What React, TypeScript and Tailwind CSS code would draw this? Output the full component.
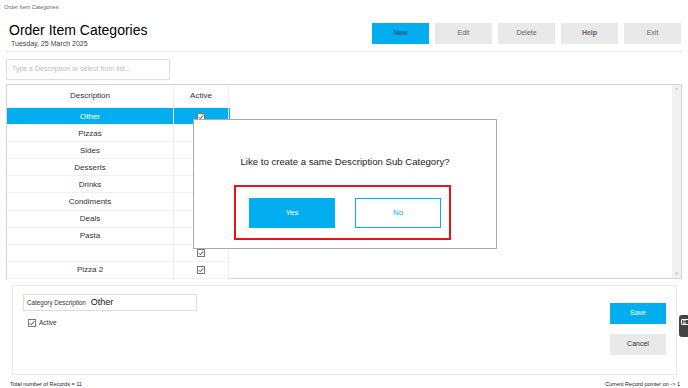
import React from 'react';

const rows = [
  { label: 'Other', active: true },
  { label: 'Pizzas', active: false },
  { label: 'Sides', active: false },
  { label: 'Desserts', active: false },
  { label: 'Drinks', active: false },
  { label: 'Condiments', active: false },
  { label: 'Deals', active: false },
  { label: 'Pasta', active: false },
  { label: '', active: true },
  { label: 'Pizza 2', active: true },
];

const topButtons = ['New', 'Edit', 'Delete', 'Help', 'Exit'];

function Check() {
  return (
    <svg width="8" height="8" viewBox="0 0 8 8">
      <rect x="0.5" y="0.5" width="7" height="7" fill="white" stroke="#777" />
      <path d="M1.8 4.2 L3.3 5.7 L6.3 2.2" fill="none" stroke="#444" strokeWidth="1" />
    </svg>
  );
}

export default function App() {
  return (
    <div className="relative w-[688px] h-[388px] bg-white overflow-hidden font-['Liberation_Sans',Arial,sans-serif] text-[#222]">
      <div className="h-[15px] pl-[4px] pt-[4px] text-[5.5px] leading-[7px] text-[#666]">Order Item Categories</div>

      {/* header */}
      <div className="mx-[6px] flex items-start justify-between border-b border-[#e6e6e6] h-[37px]">
        <div className="pl-[3px] pt-[7px]">
          <div className="text-[14px] leading-[16px] text-black">Order Item Categories</div>
          <div className="text-[7px] leading-[9px] text-[#444] pl-[2px] pt-[1px]">Tuesday, 25 March 2025</div>
        </div>
        <div className="flex gap-[6px] pt-[8px] pr-[1px]">
          {topButtons.map((b, i) => (
            <div
              key={b}
              className={`w-[57px] h-[21px] flex items-center justify-center text-[7px] ${
                i === 0 ? 'bg-[#03aef0] text-[#0a3a55]' : 'bg-[#e9e9e9] text-[#666]'
              } ${b === 'Help' ? 'font-bold text-[#333]' : ''}`}
            >
              {b}
            </div>
          ))}
        </div>
      </div>

      {/* search */}
      <div className="ml-[6px] mt-[7px] w-[164px] h-[21px] border border-[#ddd] flex items-center pl-[5px] text-[7px] text-[#bbb]">
        Type a Description or select from list...
      </div>

      {/* table */}
      <div className="ml-[6px] mt-[4px] w-[676px] h-[195px] border border-[#d4d4d4] flex">
        <div className="w-[223px] flex flex-col">
          <div className="h-[23px] shrink-0 flex border-b border-[#eee] text-[8px] text-[#333]">
            <div className="w-[167px] flex items-center justify-center border-r border-[#eee]">Description</div>
            <div className="w-[55px] flex items-center justify-center border-r border-[#eee]">Active</div>
          </div>
          {rows.map((r, i) => (
            <div
              key={i}
              className={`h-[17.1px] shrink-0 flex text-[8px] border-b border-[#f0f0f0] ${
                i === 0 ? 'bg-[#03aef0] text-white' : 'text-[#333]'
              }`}
            >
              <div className="w-[167px] flex items-center justify-center border-r border-[#eee] pt-[1px]">{r.label}</div>
              <div className="w-[55px] flex items-center justify-center border-r border-[#eee] pt-[1px]">
                {r.active && <Check />}
              </div>
            </div>
          ))}
        </div>
        <div className="flex-1" />
        <div className="w-[9px] bg-[#f0f0f0] flex flex-col items-center justify-between py-[2px] text-[5px] text-[#aaa] leading-[6px]">
          <span>^</span>
          <span>v</span>
        </div>
      </div>

      {/* bottom panel */}
      <div className="ml-[12px] mt-[6px] w-[665px] h-[90px] border border-[#e8e8e8] flex justify-between">
        <div className="pl-[10px] pt-[8px]">
          <div className="w-[174px] h-[17px] border border-[#ddd] flex items-center pl-[3px] gap-[5px]">
            <span className="text-[6.3px] text-[#333]">Category Description</span>
            <span className="text-[9px] text-[#111]">Other</span>
          </div>
          <div className="flex items-center gap-[3px] mt-[7px] pl-[5px] text-[6.5px] text-[#333]">
            <Check />
            <span>Active</span>
          </div>
        </div>
        <div className="pr-[10px] pt-[17px] flex flex-col gap-[10px]">
          <div className="w-[56px] h-[21px] bg-[#03aef0] text-white text-[7px] flex items-center justify-center">Save</div>
          <div className="w-[56px] h-[21px] bg-[#e9e9e9] text-[#333] text-[7px] flex items-center justify-center">Cancel</div>
        </div>
      </div>

      {/* footer */}
      <div className="flex justify-between pl-[10px] pr-[8px] mt-[5px] text-[5.5px] text-[#222]">
        <span>Total number of Records = 11</span>
        <span>Current Record pointer on -&gt; 1</span>
      </div>

      {/* side widget */}
      <div className="absolute left-[679px] top-[315px] w-[12px] h-[22px] bg-[#444] rounded-l-[3px] flex items-start pt-[4px] pl-[2px]">
        <div className="w-[8px] h-[6px] border border-white rounded-[1px] text-white text-[5px] leading-[4px] pl-[1px]">E</div>
      </div>

      {/* dialog */}
      <div className="absolute left-[193px] top-[119px] w-[304px] h-[130px] bg-white border border-[#aaa] flex flex-col">
        <div className="mt-[35px] text-center text-[9.6px] text-[#222]">Like to create a same Description Sub Category?</div>
        <div className="ml-[40px] mt-[16px] w-[217px] h-[55px] border-2 border-[#e5141b] flex items-center pl-[13px] gap-[20px]">
          <div className="w-[86px] h-[30px] bg-[#03aef0] text-white text-[8px] flex items-center justify-center">Yes</div>
          <div className="w-[86px] h-[30px] bg-white border border-[#03aef0] text-[#03aef0] text-[8px] flex items-center justify-center">No</div>
        </div>
      </div>
    </div>
  );
}
